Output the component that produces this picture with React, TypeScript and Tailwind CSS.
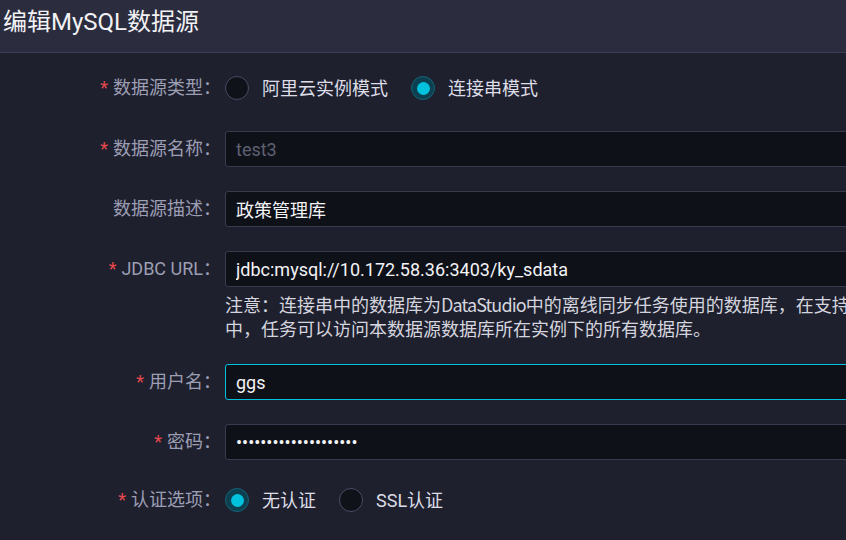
import React from 'react'

const font = { fontFamily: 'Roboto, "Noto Sans CJK SC", sans-serif' }

function Label({ text, required }: { text: string; required?: boolean }) {
  return (
    <div className="w-[221px] shrink-0 text-right text-[18px] leading-[36px] text-[#9c9eb3]">
      {required && <span className="mr-[5px] text-[#e5484d]">*</span>}
      {text}：
    </div>
  )
}

function Radio({ checked, label }: { checked?: boolean; label: string }) {
  return (
    <label className="mr-[23px] flex items-center gap-[13px]">
      {checked ? (
        <span className="flex h-[24px] w-[24px] items-center justify-center rounded-full border border-[#136477] bg-[#0c3f4f]">
          <span className="h-[13px] w-[13px] rounded-full bg-[#00c1de]" />
        </span>
      ) : (
        <span className="h-[24px] w-[24px] rounded-full border border-[#4a4c66] bg-[#10121a]" />
      )}
      <span className="text-[18px] text-[#dcdde6]">{label}</span>
    </label>
  )
}

function Field({ value, disabled, focused, password }: { value: string; disabled?: boolean; focused?: boolean; password?: boolean }) {
  return (
    <input
      readOnly
      type={password ? 'password' : 'text'}
      value={value}
      className={`h-[36px] w-[680px] shrink-0 rounded-[3px] border bg-[#0f1119] px-[10px] text-[18px] outline-none ${
        focused ? 'border-[#00c1de]' : 'border-[#393b4e]'
      } ${disabled ? 'text-[#5e6072]' : 'text-[#f3f3f6]'}`}
      style={font}
    />
  )
}

export default function App() {
  return (
    <div className="h-[540px] w-[846px] overflow-hidden bg-[#1f202e]" style={font}>
      <header className="h-[53px] border-b border-[#3b3d55] bg-[#2b2d3f] pl-[3px] pt-[5px]">
        <h1 className="text-[24px] leading-[34px] text-[#f2f2f5]">编辑MySQL数据源</h1>
      </header>

      <div className="flex flex-col">
        <div className="mt-[18px] flex h-[34px] items-center">
          <Label text="数据源类型" required />
          <div className="ml-[4px] flex items-center">
            <Radio label="阿里云实例模式" />
            <Radio checked label="连接串模式" />
          </div>
        </div>

        <div className="mt-[26px] flex items-center">
          <Label text="数据源名称" required />
          <div className="ml-[4px]">
            <Field value="test3" disabled />
          </div>
        </div>

        <div className="mt-[24px] flex items-center">
          <Label text="数据源描述" />
          <div className="ml-[4px]">
            <Field value="政策管理库" />
          </div>
        </div>

        <div className="mt-[24px] flex items-start">
          <Label text="JDBC URL" required />
          <div className="ml-[4px] w-[680px] overflow-hidden">
            <Field value="jdbc:mysql://10.172.58.36:3403/ky_sdata" />
            <div
              className="mt-[5px] whitespace-nowrap text-[18px] leading-[24px] text-[#d4d5de]"
              style={{ fontFamily: '"Noto Sans CJK SC", sans-serif' }}
            >
              <div>
                注意：连接串中的数据库为<span className="tracking-[-0.9px]">DataStudio</span>
                中的离线同步任务使用的数据库，在支持跨库查询的场景
              </div>
              <div>中，任务可以访问本数据源数据库所在实例下的所有数据库。</div>
            </div>
          </div>
        </div>

        <div className="mt-[24px] flex items-center">
          <Label text="用户名" required />
          <div className="ml-[4px]">
            <Field value="ggs" focused />
          </div>
        </div>

        <div className="mt-[24px] flex items-center">
          <Label text="密码" required />
          <div className="ml-[4px]">
            <Field value="aaaaaaaaaaaaaaaaaaaa" password />
          </div>
        </div>

        <div className="mt-[23px] flex h-[34px] items-center">
          <Label text="认证选项" required />
          <div className="ml-[4px] flex items-center">
            <Radio checked label="无认证" />
            <Radio label="SSL认证" />
          </div>
        </div>
      </div>
    </div>
  )
}
